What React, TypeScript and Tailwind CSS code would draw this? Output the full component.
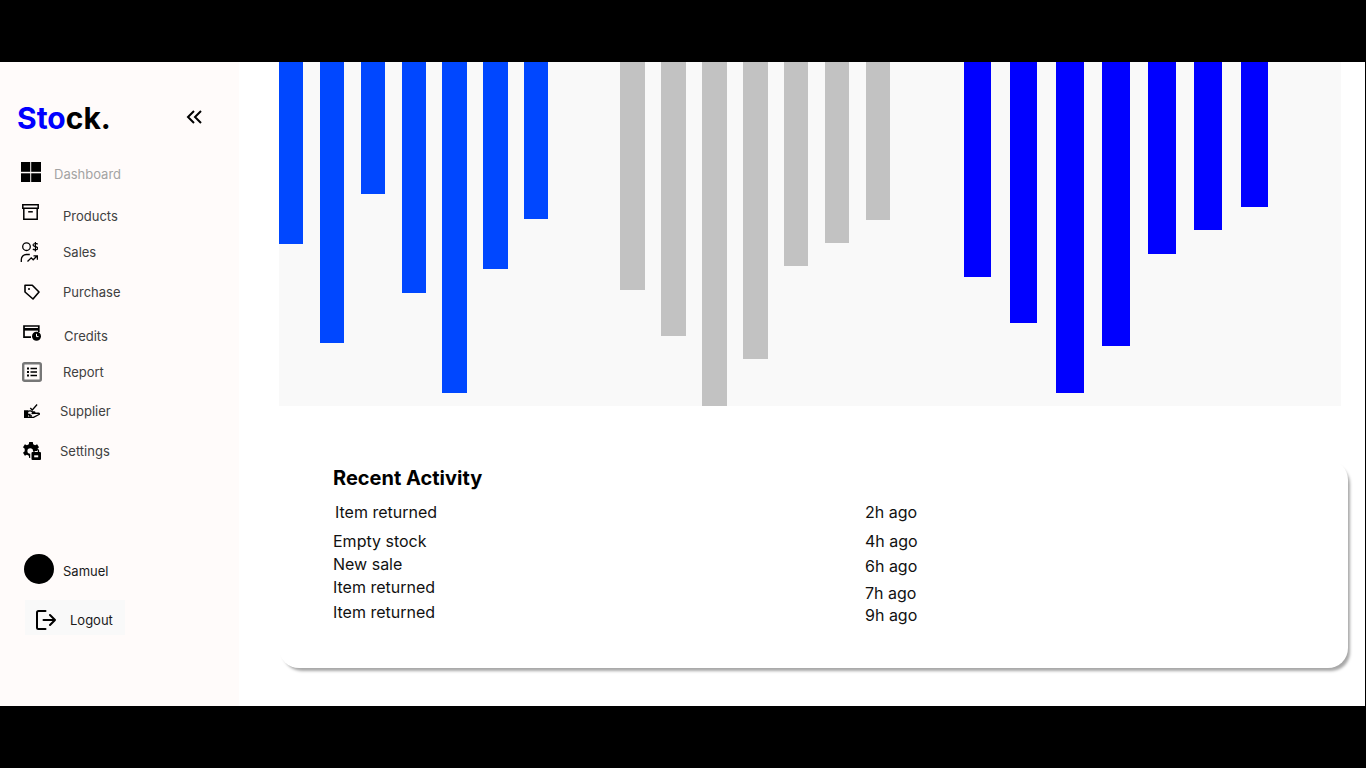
import React from "react";

const Bar = ({ w, h, c, mr }: { w: string; h: string; c: string; mr?: string }) => <div className={`${w} ${h} ${c} ${mr ?? ""} shrink-0`} />;

const DashIcon = () => (
  <svg width="20" height="20" viewBox="0 0 20 20" fill="#000"><rect x="0" y="0" width="9.200" height="9.800" /><rect x="10.200" y="0" width="9.800" height="9.800" /><rect x="0" y="11.300" width="9.200" height="8.700" /><rect x="10.200" y="11.300" width="9.800" height="8.700" /></svg>
);
const ArchiveIcon = () => (
  <svg width="17" height="16" viewBox="0 0 17 16" fill="none" stroke="#000" strokeWidth="1.500"><path d="M.8.800h15.400v3.400H.800z" /><path d="M1.800 4.200v11h13.400v-11" /><path d="M6.200 7.800h4.600" /></svg>
);
const SalesIcon = () => (
  <svg width="18" height="20" viewBox="0 0 18 20" fill="none" stroke="#000" strokeWidth="1.300"><circle cx="6.500" cy="4.700" r="3.800" /><path d="M1.300 20v-2.500a5 5 0 0 1 5-5h3.500" /><path d="M7.500 19.500l3.700-3.700 2 2 4-4M13.500 13.800h3.900v3.900" /><path d="M17.600 2.300c-.8-1.200-4.600-1.200-4.600.8 0 1.900 4.800 1.200 4.800 3.200 0 1.900-4.100 1.900-4.900.6M15.400 0v9.500" strokeWidth="1.200" /></svg>
);
const TagIcon = () => (
  <svg width="16" height="16" viewBox="0 0 16 16" fill="none" stroke="#000" strokeWidth="1.600" strokeLinejoin="round"><path d="M1 1.200h7.300L15 8l-6 7L1 8z" /><circle cx="5" cy="5" r="1" fill="#000" stroke="none" /></svg>
);
const CreditIcon = () => (
  <svg width="18" height="16" viewBox="0 0 18 16" fill="none"><path d="M8 12.200H1V1h14.800v6" stroke="#000" strokeWidth="1.700" /><rect x="1" y="3" width="15" height="2.600" fill="#000" /><circle cx="13.500" cy="11.300" r="4.500" fill="#000" /><path d="M13.500 8.800v2.800h2" stroke="#fff" strokeWidth="1" /></svg>
);
const ReportIcon = () => (
  <svg width="20" height="20" viewBox="0 0 20 20" fill="none"><rect x="1.200" y="1.200" width="17.600" height="17.600" rx="1.500" stroke="#777" strokeWidth="2.400" /><path d="M5 5.500h2v2H5zM5 9h2v2H5zM5 12.500h2v2H5zM8.500 5.800h6.500v1.400H8.500zM8.500 9.300h6.500v1.400H8.500zM8.500 12.800h6.500v1.400H8.500z" fill="#000" /></svg>
);
const SupplierIcon = () => (
  <svg width="16" height="14" viewBox="0 0 16 14" fill="none" stroke="#000" strokeWidth="1.300"><path d="M.6 7h3v6.500h-3z" fill="#000" /><path d="M3.600 7.500c2-1 3.500-1 5 .5h1.500c1 0 1 1.500 0 1.500H7.500l7-.3c1 0 1.200 1 .5 1.300L9.500 13.400H3.600" /><path d="M3.600 10.500h3M5 12h3" /><path d="M6.300 4l2 2 4.800-5.500" /></svg>
);
const SettingsIcon = () => (
  <svg width="18" height="18" viewBox="0 0 18 18" fill="#000"><path d="M6.200 0h3.600l.4 2.200 1.900 1 2-.9 1.900 3-1.700 1.400V9H10a2.800 2.800 0 1 0-2.800 2.800V16H6.200l-.4-2.200-1.900-1-2 .9L0 10.700l1.700-1.400V6.700L0 5.300l1.900-3 2 .9 1.900-1z" /><rect x="8.500" y="10" width="9.500" height="8" rx="1" /><path d="M11 10V8.700a2.300 2.300 0 0 1 4.500 0V10" fill="none" stroke="#000" strokeWidth="1.300" /><rect x="11.200" y="13.300" width="4" height="2" fill="#fffbfa" /></svg>
);
const LogoutIcon = () => (
  <svg width="20" height="20" viewBox="0 0 20 20" fill="none" stroke="#000" strokeWidth="2" strokeLinecap="round" strokeLinejoin="round"><path d="M9.500 1H2.500A1.500 1.500 0 0 0 1 2.500v15A1.500 1.500 0 0 0 2.500 19h7" /><path d="M7.500 10h11.500M14 5l5 5-5 5" /></svg>
);
const ChevronsIcon = () => (
  <svg width="16" height="14" viewBox="0 0 16 14" fill="none" stroke="#000" strokeWidth="2"><path d="M8 1L2 7l6 6M15 1L9 7l6 6" /></svg>
);

function NavRow({ icon, label, iconW, gap, mt, text = "text-[#404040]" }: { icon: React.ReactNode; label: string; iconW: string; gap: string; mt: string; text?: string }) {
  return (
    <div className={`flex items-center h-5 ${mt}`}>
      <div className={`${iconW} flex justify-center shrink-0`}>{icon}</div>
      <span className={`${gap} text-[13px] leading-4 ${text}`}>{label}</span>
    </div>
  );
}

export default function App() {
  return (
    <div className="w-[1366px] h-[768px] bg-black flex flex-col overflow-hidden" style={{ fontFamily: "Inter, 'Liberation Sans', sans-serif" }}>
      <div className="h-[62px] shrink-0" />
      <div className="h-[644px] flex">
        <aside className="w-[239px] shrink-0 bg-[#fffbfa] flex flex-col">
          <div className="flex items-center mt-[39px] ml-[17px] h-[34px]">
            <div className="text-[30px] leading-[34px] font-bold text-black w-[169px]"><span className="text-[#0000ff]">Sto</span>ck.</div>
            <div className="mb-[2px]"><ChevronsIcon /></div>
          </div>
          <NavRow icon={<DashIcon />} label="Dashboard" iconW="w-[20px] ml-[21px]" gap="ml-[13px] mt-[4px]" mt="mt-[27px]" text="text-[#a3a3a3]" />
          <NavRow icon={<ArchiveIcon />} label="Products" iconW="w-[17px] ml-[22px]" gap="ml-[24px] mt-[8px]" mt="mt-[20px]" />
          <NavRow icon={<SalesIcon />} label="Sales" iconW="w-[18px] ml-[20px]" gap="ml-[25px]" mt="mt-[20px]" />
          <NavRow icon={<TagIcon />} label="Purchase" iconW="w-[16px] ml-[24px]" gap="ml-[23px]" mt="mt-[20px]" />
          <NavRow icon={<CreditIcon />} label="Credits" iconW="w-[18px] ml-[23px]" gap="ml-[23px] mt-[6px]" mt="mt-[21px]" />
          <NavRow icon={<ReportIcon />} label="Report" iconW="w-[20px] ml-[22px]" gap="ml-[21px]" mt="mt-[19px]" />
          <NavRow icon={<SupplierIcon />} label="Supplier" iconW="w-[16px] ml-[24px]" gap="ml-[20px]" mt="mt-[19px]" />
          <NavRow icon={<SettingsIcon />} label="Settings" iconW="w-[18px] ml-[23px]" gap="ml-[19px]" mt="mt-[20px]" />
          <div className="flex items-center mt-[93px] ml-[24px] h-[30px]">
            <div className="w-[30px] h-[30px] rounded-full bg-black" />
            <span className="ml-[9px] text-[13px] leading-4 text-[#1a1a1a] mt-[4px]">Samuel</span>
          </div>
          <div className="flex items-center mt-[16px] ml-[25px] w-[100px] h-[35px] bg-[#f9f9f9]">
            <div className="ml-[11px] mt-[5px]"><LogoutIcon /></div>
            <span className="ml-[14px] text-[13px] leading-4 text-[#1a1a1a] mt-[5px]">Logout</span>
          </div>
        </aside>
        <main className="w-[1126px] bg-white flex flex-col">
          <div className="ml-[40px] w-[1062px] h-[344px] shrink-0 bg-[#f9f9f9] flex items-start overflow-hidden">
            <Bar w="w-[24px]" h="h-[182px]" c="bg-[#0047ff]" mr="mr-[17px]" />
            <Bar w="w-[24px]" h="h-[281px]" c="bg-[#0047ff]" mr="mr-[17px]" />
            <Bar w="w-[24px]" h="h-[132px]" c="bg-[#0047ff]" mr="mr-[17px]" />
            <Bar w="w-[24px]" h="h-[231px]" c="bg-[#0047ff]" mr="mr-[16px]" />
            <Bar w="w-[25px]" h="h-[331px]" c="bg-[#0047ff]" mr="mr-[16px]" />
            <Bar w="w-[25px]" h="h-[207px]" c="bg-[#0047ff]" mr="mr-[16px]" />
            <Bar w="w-[24px]" h="h-[157px]" c="bg-[#0047ff]" mr="mr-[72px]" />
            <Bar w="w-[25px]" h="h-[228px]" c="bg-[#c2c2c2]" mr="mr-[16px]" />
            <Bar w="w-[25px]" h="h-[274px]" c="bg-[#c2c2c2]" mr="mr-[16px]" />
            <Bar w="w-[25px]" h="h-[344px]" c="bg-[#c2c2c2]" mr="mr-[16px]" />
            <Bar w="w-[25px]" h="h-[297px]" c="bg-[#c2c2c2]" mr="mr-[16px]" />
            <Bar w="w-[24px]" h="h-[204px]" c="bg-[#c2c2c2]" mr="mr-[17px]" />
            <Bar w="w-[24px]" h="h-[181px]" c="bg-[#c2c2c2]" mr="mr-[17px]" />
            <Bar w="w-[24px]" h="h-[158px]" c="bg-[#c2c2c2]" mr="mr-[74px]" />
            <Bar w="w-[27px]" h="h-[215px]" c="bg-[#0000ff]" mr="mr-[19px]" />
            <Bar w="w-[27px]" h="h-[261px]" c="bg-[#0000ff]" mr="mr-[19px]" />
            <Bar w="w-[28px]" h="h-[331px]" c="bg-[#0000ff]" mr="mr-[18px]" />
            <Bar w="w-[28px]" h="h-[284px]" c="bg-[#0000ff]" mr="mr-[18px]" />
            <Bar w="w-[28px]" h="h-[192px]" c="bg-[#0000ff]" mr="mr-[18px]" />
            <Bar w="w-[28px]" h="h-[168px]" c="bg-[#0000ff]" mr="mr-[19px]" />
            <Bar w="w-[27px]" h="h-[145px]" c="bg-[#0000ff]" />
          </div>
          <div className="ml-[40px] mt-[54px] w-[1069px] h-[208px] shrink-0 bg-white rounded-[20px] shadow-[3px_4px_3px_-1px_rgba(0,0,0,0.35)] pl-[54px] pt-[6px]">
            <h2 className="text-[20px] leading-6 font-bold text-black">Recent Activity</h2>
            <div className="flex text-base leading-5 text-[#111]">
              <div className="w-[532px] flex flex-col">
                <span className="mt-[12px] pl-[2px]">Item returned</span>
                <span className="mt-[9px]">Empty stock</span>
                <span className="mt-[3px]">New sale</span>
                <span className="mt-[3px]">Item returned</span>
                <span className="mt-[5px]">Item returned</span>
              </div>
              <div className="flex flex-col">
                <span className="mt-[12px]">2h ago</span>
                <span className="mt-[9px]">4h ago</span>
                <span className="mt-[5px]">6h ago</span>
                <span className="mt-[7px]">7h ago</span>
                <span className="mt-[2px]">9h ago</span>
              </div>
            </div>
          </div>
        </main>
        <div className="w-px shrink-0 bg-black" />
      </div>
    </div>
  );
}
